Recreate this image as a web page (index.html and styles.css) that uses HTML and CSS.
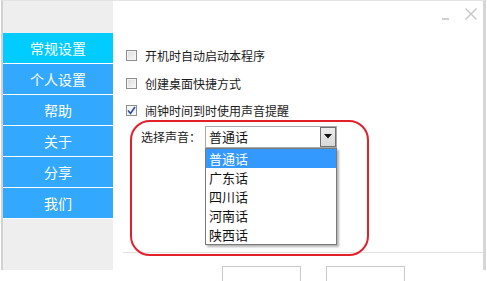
FILE: index.html
```html
<!DOCTYPE html>
<html>
<head>
<meta charset="utf-8">
<link rel="stylesheet" href="styles.css">
</head>
<body>
<div class="window">
  <aside class="sidebar">
    <div class="nav-item active">常规设置</div>
    <div class="nav-item">个人设置</div>
    <div class="nav-item">帮助</div>
    <div class="nav-item">关于</div>
    <div class="nav-item">分享</div>
    <div class="nav-item">我们</div>
  </aside>
  <main class="content">
    <div class="titlebar">
      <span class="btn-min"></span>
      <svg class="btn-close" width="12" height="12" viewBox="0 0 12 12"><path d="M0.5 0.5 L11.5 11.5 M11.5 0.5 L0.5 11.5" stroke="#c4c4c4" stroke-width="1.3" fill="none"/></svg>
    </div>
    <div class="options">
      <label class="opt"><span class="cb"></span>开机时自动启动本程序</label>
      <label class="opt"><span class="cb"></span>创建桌面快捷方式</label>
      <label class="opt"><span class="cb checked"><svg width="9" height="9" viewBox="0 0 9 9"><path d="M1 4.5 L3.5 7.5 L8 1" stroke="#2a4bb0" stroke-width="1.6" fill="none"/></svg></span>闹钟时间到时使用声音提醒</label>
      <div class="sound-row">
        <span class="sound-label">选择声音：</span>
        <div class="select">
          <span class="select-value">普通话</span>
          <span class="select-arrow"><svg width="8" height="5" viewBox="0 0 8 5"><path d="M0 0 H8 L4 4.5 Z" fill="#111"/></svg></span>
          <ul class="droplist">
            <li class="sel">普通话</li>
            <li>广东话</li>
            <li>四川话</li>
            <li>河南话</li>
            <li>陕西话</li>
          </ul>
        </div>
      </div>
    </div>
    <div class="footer">
      <span class="fbtn"></span>
      <span class="fbtn"></span>
    </div>
    <div class="highlight"></div>
  </main>
</div>
</body>
</html>
```

FILE: styles.css
```css
* { box-sizing: border-box; }
html, body { margin: 0; padding: 0; background: #fff; }
body {
  font-family: "Noto Sans CJK SC", "Noto Sans", sans-serif;
  padding-left: 1px;
  width: 487px;
  height: 281px;
  overflow: hidden;
}
.window {
  display: flex;
  width: 485px;
  height: 270px;
  border-top: 1px solid #e4e4e4;
  border-left: 2px solid #d2d2d2;
  border-right: 3px solid #d6d6d6;
}
.sidebar {
  width: 110px;
  flex: none;
  background: #eeeeee;
  padding-top: 32px;
  display: flex;
  flex-direction: column;
}
.nav-item {
  height: 31px;
  line-height: 30px;
  border-bottom: 1px solid #fff;
  background: #33a8ff;
  color: #fff;
  font-size: 14px;
  text-align: center;
}
.nav-item.active { background: #00ccff; }
.content {
  flex: 1;
  position: relative;
  display: flex;
  flex-direction: column;
}
.titlebar {
  height: 41px;
  position: relative;
}
.btn-min {
  position: absolute;
  left: 329px;
  top: 17px;
  width: 7px;
  height: 2px;
  background: #cfcfcf;
}
.btn-close {
  position: absolute;
  left: 352px;
  top: 7px;
}
.options {
  padding-left: 13px;
  display: flex;
  flex-direction: column;
}
.opt {
  display: flex;
  align-items: center;
  height: 27.5px;
  font-size: 12px;
  color: #1a1a1a;
}
.cb {
  width: 11px;
  height: 11px;
  border: 1px solid #8e8e8e;
  background: linear-gradient(135deg, #dcdcdc, #f8f8f8);
  margin-right: 8px;
  display: flex;
  align-items: center;
  justify-content: center;
  box-shadow: inset 0 0 0 1px #f4f4f4;
}
.cb.checked { background: #f4f4f4; }
.sound-row {
  display: flex;
  align-items: center;
  margin-top: 1px;
  padding-left: 15px;
  font-size: 12px;
  color: #1a1a1a;
}
.sound-label { width: 64px; }
.select {
  position: relative;
  width: 132px;
  height: 22px;
  border: 1px solid #a9a9a9;
  background: #fff;
  display: flex;
  align-items: center;
  padding-left: 3px;
  font-size: 13px;
  color: #111;
}
.select-value { flex: 1; }
.select-arrow {
  width: 16px;
  height: 20px;
  border: 1px solid #707070;
  background: linear-gradient(#ececec, #d8d8d8);
  display: flex;
  align-items: center;
  justify-content: center;
}
.droplist {
  position: absolute;
  left: -1px;
  top: 21px;
  width: 132px;
  margin: 0;
  padding: 0;
  list-style: none;
  border: 1px solid #7a7a7a;
  background: #fff;
  box-shadow: 2px 2px 2px rgba(0,0,0,0.3);
}
.droplist li {
  height: 19px;
  line-height: 19px;
  padding-left: 3px;
  font-size: 13px;
  color: #111;
}
.droplist li.sel { background: #3399ff; color: #fff; }
.footer {
  margin-top: auto;
  margin-left: 10px;
  height: 18px;
  border-top: 1px solid #e2e2e2;
  display: flex;
  align-items: flex-start;
  gap: 25px;
  padding-left: 99px;
  padding-top: 13px;
}
.fbtn {
  width: 79px;
  height: 15px;
  border: 1px solid #c8c8c8;
  border-bottom: none;
  background: #fff;
  flex: none;
}
.highlight {
  position: absolute;
  left: 17px;
  top: 119px;
  width: 239px;
  height: 136px;
  border: 2px solid #e2202c;
  border-radius: 20px;
  pointer-events: none;
}
```
